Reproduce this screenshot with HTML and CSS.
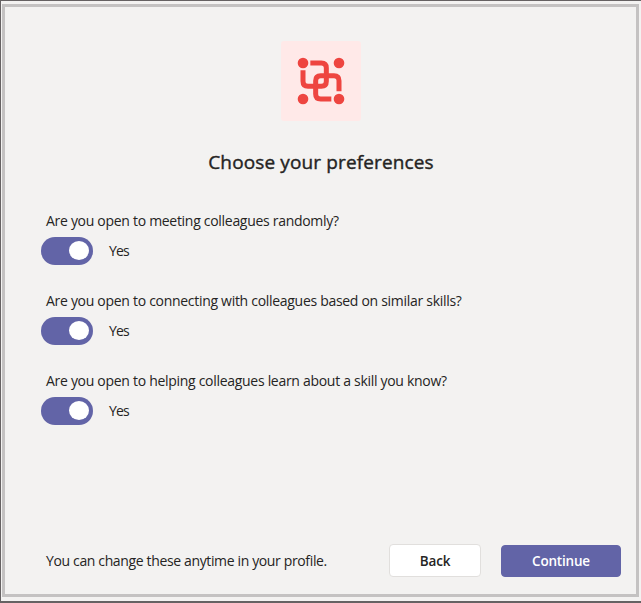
FILE: index.html
```html
<!DOCTYPE html>
<html lang="en">
<head>
<meta charset="utf-8">
<title>Choose your preferences</title>
<link rel="stylesheet" href="styles.css">
</head>
<body>
<main class="dialog">
  <svg class="logo" viewBox="0 0 240 240" aria-hidden="true">
    <rect width="240" height="240" rx="9" fill="#ffe9e8"/>
    <g fill="none" stroke="#ee4540" stroke-width="15">
      <path d="M88 66H121Q136 66 136 81V121Q136 136 121 136H81Q66 136 66 121V88"/>
      <path d="M174 151V119Q174 104 159 104H119Q104 104 104 119V159Q104 174 119 174H151"/>
    </g>
    <g fill="#ee4540">
      <circle cx="66" cy="66" r="16"/><circle cx="174" cy="66" r="16"/>
      <circle cx="66" cy="174" r="16"/><circle cx="174" cy="174" r="16"/>
    </g>
  </svg>
  <h1 class="title">Choose your preferences</h1>
  <section class="questions">
    <div class="question">
      <p class="label">Are you open to meeting colleagues randomly?</p>
      <div class="control"><span class="toggle"></span><span class="value">Yes</span></div>
    </div>
    <div class="question">
      <p class="label">Are you open to connecting with colleagues based on similar skills?</p>
      <div class="control"><span class="toggle"></span><span class="value">Yes</span></div>
    </div>
    <div class="question">
      <p class="label">Are you open to helping colleagues learn about a skill you know?</p>
      <div class="control"><span class="toggle"></span><span class="value">Yes</span></div>
    </div>
  </section>
  <footer class="footer">
    <p class="note">You can change these anytime in your profile.</p>
    <button class="btn back">Back</button>
    <button class="btn primary">Continue</button>
  </footer>
</main>
</body>
</html>
```
FILE: styles.css
```css
* { box-sizing: border-box; }
body {
  margin: 0;
  height: 603px;
  padding: 3px 2px 4px 1px;
  border: solid #666263;
  border-width: 1px 0 2px 1px;
  background: #f3f2f1;
  color: #252423;
  font: 14px/20px "Open Sans", "Noto Sans", sans-serif;
  letter-spacing: -0.295px;
  overflow: hidden;
}
h1, p { margin: 0; }
.dialog {
  height: 593px;
  border: 3px solid #c4c2c2;
  display: flex;
  flex-direction: column;
  align-items: center;
}
.logo { display: block; width: 80px; height: 80px; margin-top: 34px; flex: none; }
.title {
  margin-top: 27px;
  padding-left: 1px;
  font-size: 19px;
  line-height: 28px;
  font-weight: 400;
  letter-spacing: 0.13px;
  -webkit-text-stroke: 0.4px #252423;
}
.questions {
  align-self: stretch;
  margin-top: 35px;
  padding-left: 36px;
  display: flex;
  flex-direction: column;
  gap: 26px;
}
.question { height: 54px; }
.label { padding-left: 5px; white-space: nowrap; }
.control { display: flex; align-items: center; gap: 16px; margin-top: 6px; height: 28px; }
.value { letter-spacing: -0.9px; }
.toggle {
  width: 52px;
  height: 28px;
  border-radius: 14px;
  background: #6264a7;
  display: flex;
  align-items: center;
  justify-content: flex-end;
  padding: 0 4px 1px 0;
}
.toggle::after { content: ""; width: 20px; height: 19px; border-radius: 50%; background: #fff; }
.footer {
  align-self: stretch;
  margin: auto 15px 17px 41px;
  display: flex;
  align-items: center;
}
.note { flex: 1; padding-top: 1px; white-space: nowrap; letter-spacing: -0.36px; }
.btn {
  height: 33px;
  padding: 0;
  border: 1px solid #e1dfdd;
  border-radius: 4px;
  background: #fff;
  color: #252423;
  font: 600 13.5px/20px "Open Sans", "Noto Sans", sans-serif;
  letter-spacing: -0.2px;
}
.back { width: 92px; }
.primary { width: 120px; height: 32px; margin-left: 20px; background: #6264a7; border-color: #6264a7; color: #fff; }
```
